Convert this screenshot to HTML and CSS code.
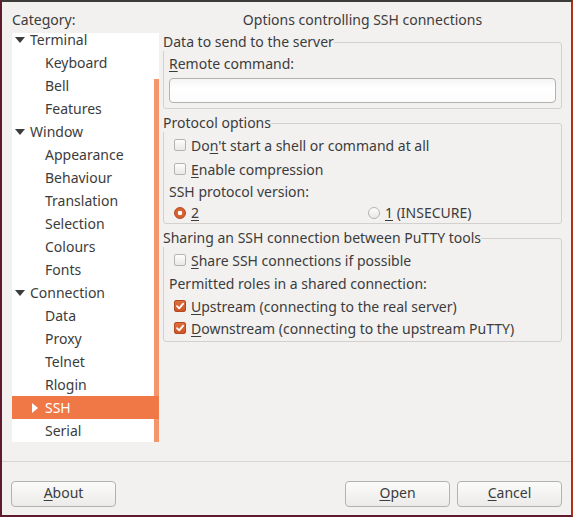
FILE: index.html
```html
<!DOCTYPE html>
<html>
<head>
<meta charset="utf-8">
<link rel="stylesheet" href="styles.css">
</head>
<body>
<div class="window">
  <div class="main">
    <div class="left">
      <div class="cat-label">Cate<u>g</u>ory:</div>
      <div class="tree">
        <div class="thumb"></div>
        <ul class="tree-list">
          <li class="row parent"><svg class="exp" width="10" height="6" viewBox="0 0 10 6"><path d="M0 0H10L5 6Z" fill="#3c3c3c"/></svg>Terminal</li>
          <li class="row child">Keyboard</li>
          <li class="row child">Bell</li>
          <li class="row child">Features</li>
          <li class="row parent"><svg class="exp" width="10" height="6" viewBox="0 0 10 6"><path d="M0 0H10L5 6Z" fill="#3c3c3c"/></svg>Window</li>
          <li class="row child">Appearance</li>
          <li class="row child">Behaviour</li>
          <li class="row child">Translation</li>
          <li class="row child">Selection</li>
          <li class="row child">Colours</li>
          <li class="row child">Fonts</li>
          <li class="row parent"><svg class="exp" width="10" height="6" viewBox="0 0 10 6"><path d="M0 0H10L5 6Z" fill="#3c3c3c"/></svg>Connection</li>
          <li class="row child">Data</li>
          <li class="row child">Proxy</li>
          <li class="row child">Telnet</li>
          <li class="row child">Rlogin</li>
          <li class="row selected"><svg class="col" width="6" height="10" viewBox="0 0 6 10"><path d="M0 0V10L6 5Z" fill="#ffffff"/></svg>SSH</li>
          <li class="row child">Serial</li>
        </ul>
      </div>
    </div>
    <div class="right">
      <div class="title">Options controlling SSH connections</div>
      <fieldset class="frame f1">
        <legend>Data to send to the server</legend>
        <div class="field-label"><u>R</u>emote command:</div>
        <div class="entry"></div>
      </fieldset>
      <fieldset class="frame f2">
        <legend>Protocol options</legend>
        <div class="check-row"><span class="box"></span><span>Do<u>n</u>'t start a shell or command at all</span></div>
        <div class="check-row"><span class="box"></span><span><u>E</u>nable compression</span></div>
        <div class="plain-row">SSH protocol version:</div>
        <div class="radio-row">
          <div class="radio-item"><span class="radio on"></span><span><u>2</u></span></div>
          <div class="radio-item"><span class="radio"></span><span><u>1</u> (INSECURE)</span></div>
        </div>
      </fieldset>
      <fieldset class="frame f3">
        <legend>Sharing an SSH connection between PuTTY tools</legend>
        <div class="check-row"><span class="box"></span><span><u>S</u>hare SSH connections if possible</span></div>
        <div class="plain-row tall">Permitted roles in a shared connection:</div>
        <div class="check-row short"><span class="box on"><svg width="10" height="10" viewBox="0 0 10 10"><path d="M2 5.2L4.2 7.4L8.2 2.6" fill="none" stroke="#fff" stroke-width="1.8" stroke-linecap="round" stroke-linejoin="round"/></svg></span><span><u>U</u>pstream (connecting to the real server)</span></div>
        <div class="check-row short"><span class="box on"><svg width="10" height="10" viewBox="0 0 10 10"><path d="M2 5.2L4.2 7.4L8.2 2.6" fill="none" stroke="#fff" stroke-width="1.8" stroke-linecap="round" stroke-linejoin="round"/></svg></span><span><u>D</u>ownstream (connecting to the upstream PuTTY)</span></div>
      </fieldset>
    </div>
  </div>
  <div class="sep"></div>
  <div class="buttons">
    <button class="btn"><u>A</u>bout</button>
    <div class="spacer"></div>
    <button class="btn"><u>O</u>pen</button>
    <button class="btn"><u>C</u>ancel</button>
  </div>
</div>
</body>
</html>
```
FILE: styles.css
```css
* { box-sizing: border-box; }
html, body { margin: 0; padding: 0; }
body {
  font-family: "Noto Sans", "DejaVu Sans", sans-serif;
  font-size: 14px;
  color: #3c3c3c;
  background: #f2f1f0;
}
u { text-decoration: underline; text-underline-offset: 2px; text-decoration-thickness: 1px; }
.window {
  width: 573px;
  height: 517px;
  background: #f2f1f0;
  border-top: 2px solid #3c3b37;
  border-left: 2px solid #5e1b2d;
  border-right: 2px solid #ad2f17;
  border-bottom: 2px solid #5e1b2d;
  display: flex;
  flex-direction: column;
}
.main {
  display: grid;
  grid-template-columns: 147px 399px;
  column-gap: 4px;
  padding-left: 10px;
  height: 440px;
}
.cat-label, .title {
  height: 31px;
  padding-top: 5px;
  line-height: 26px;
}
.title { text-align: center; }
.tree {
  height: 409px;
  background: #ffffff;
  overflow: hidden;
  position: relative;
}
.thumb {
  position: absolute;
  left: 142px;
  top: 46px;
  width: 5px;
  height: 370px;
  background: #f5966a;
}
.tree-list {
  list-style: none;
  margin: -5px 0 0 0;
  padding: 0;
  position: relative;
}
.row {
  height: 23px;
  line-height: 23px;
  display: flex;
  align-items: center;
  white-space: nowrap;
}
.parent { padding-left: 3px; }
.parent .exp { margin-right: 5px; }
.child { padding-left: 33px; }
.selected {
  background: #f07746;
  color: #ffffff;
  padding-left: 20px;
  position: relative;
  z-index: 1;
}
.selected .col { margin-right: 7px; }
.frame {
  margin: 0;
  padding: 0;
  border: 1px solid #d3d1cd;
  border-radius: 3px;
  min-width: 0;
}
.frame legend {
  padding: 0;
  margin-left: -1px;
  line-height: 18px;
  height: 18px;
}
.f2, .f3 { margin-top: 5px; }
.f1 { padding-bottom: 5px; }
.f2 { padding-top: 1px; padding-bottom: 6px; }
.f3 { padding-top: 1px; padding-bottom: 2px; }
.field-label {
  padding-top: 4px;
  line-height: 18px;
  margin-left: 5px;
}
.entry {
  margin: 5px 5px 0 5px;
  height: 25px;
  border: 1px solid #b3b2ae;
  border-radius: 4px;
  background: linear-gradient(#f4f4f4, #ffffff 40%, #fbfbfb);
}
.check-row {
  height: 24px;
  display: flex;
  align-items: center;
  padding-left: 10px;
  gap: 5px;
  white-space: nowrap;
}
.check-row.short { height: 22px; }
.box {
  width: 12px;
  height: 12px;
  border: 1px solid #b5b4b0;
  border-radius: 2px;
  background: linear-gradient(#fdfdfd, #e9e8e6);
  display: flex;
  align-items: center;
  justify-content: center;
  flex: none;
}
.box.on {
  border-color: #b24a21;
  background: linear-gradient(#e26c3d, #cf5527);
}
.plain-row {
  height: 22px;
  line-height: 22px;
  padding-left: 5px;
}
.plain-row.tall { height: 23px; line-height: 23px; }
.radio-row {
  height: 14px;
  display: grid;
  grid-template-columns: 194px 1fr;
  padding-left: 10px;
}
.radio-item {
  display: flex;
  align-items: center;
  gap: 5px;
  white-space: nowrap;
}
.radio {
  width: 12px;
  height: 12px;
  border-radius: 50%;
  border: 1px solid #b5b4b0;
  background: linear-gradient(#fdfdfd, #e9e8e6);
  flex: none;
}
.radio.on {
  border-color: #b24a21;
  background: radial-gradient(circle, #ffffff 0 2px, #d9602f 2.6px);
}
.sep {
  margin-top: 19px;
  height: 1px;
  background: #d9d7d3;
}
.buttons {
  display: flex;
  padding: 19px 9px 0 9px;
  gap: 7px;
}
.spacer { flex: 1; }
.btn {
  width: 105px;
  height: 26px;
  font-family: inherit;
  font-size: 14px;
  line-height: 22px;
  color: #3c3c3c;
  border: 1px solid #b3b2ae;
  border-radius: 4px;
  background: linear-gradient(#fbfbfa, #ecebe9);
  padding: 0 0 2px 0;
}
```
